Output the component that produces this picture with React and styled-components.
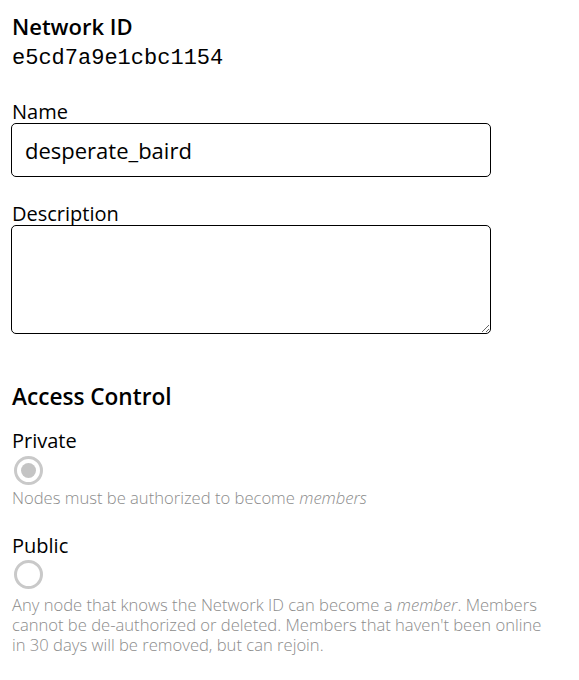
import React from "react";
import styled, { createGlobalStyle } from "styled-components";

const Global = createGlobalStyle`
  html, body { margin: 0; padding: 0; background: #ffffff; }
  body { font-family: "Open Sans", "Noto Sans", sans-serif; color: #000; }
`;

const Form = styled.div`
  width: 480px;
  padding: 12px 0 0 11px;
  display: flex;
  flex-direction: column;
`;

const Heading = styled.h2`
  margin: ${(p) => p.$top || 0}px 0 0 1px;
  font-size: ${(p) => p.$size || 22}px;
  line-height: 28px;
  font-weight: 600;
`;

const NetId = styled.div`
  margin: 6px 0 0 1px;
  font-family: "Liberation Mono", "DejaVu Sans Mono", monospace;
  font-size: 22px;
  line-height: 26px;
`;

const Field = styled.label`
  display: flex;
  flex-direction: column;
  margin-top: ${(p) => p.$top}px;
`;

const Label = styled.span`
  margin-left: 1px;
  font-size: 20px;
  line-height: 22px;
  font-weight: 500;
`;

const TextInput = styled.input`
  box-sizing: border-box;
  width: 480px;
  height: 54px;
  margin: 0;
  padding: 0 13px;
  border: 1px solid #000;
  border-radius: 5px;
  font-family: "Open Sans", "Noto Sans", sans-serif;
  font-size: 22px;
  color: #000;
  outline: none;
`;

const TextArea = styled.textarea`
  box-sizing: border-box;
  width: 480px;
  height: 109px;
  margin: 0;
  padding: 8px 13px;
  border: 1px solid #000;
  border-radius: 5px;
  font-family: "Open Sans", "Noto Sans", sans-serif;
  font-size: 18px;
  resize: vertical;
  outline: none;
  display: block;
`;

const Option = styled.div`
  display: flex;
  flex-direction: column;
  align-items: flex-start;
  margin-top: ${(p) => p.$top}px;
`;

const Radio = styled.input.attrs({ type: "radio" })`
  appearance: none;
  box-sizing: border-box;
  width: 29px;
  height: 29px;
  margin: ${(p) => p.$gap || 5}px 0 0 3px;
  border: 3px solid #c9c9c9;
  border-radius: 50%;
  background: #fff;
  display: grid;
  place-content: center;
  &::before {
    content: "";
    width: 15px;
    height: 15px;
    border-radius: 50%;
    background: #c4c4c4;
    transform: scale(0);
  }
  &:checked::before {
    transform: scale(1);
  }
`;

const Hint = styled.p`
  margin: ${(p) => p.$gap || 3}px 0 0 1px;
  width: 545px;
  font-size: 16.6px;
  line-height: 20px;
  font-weight: 300;
  color: #8c8c8c;
  em { font-style: italic; }
`;

export default function App() {
  return (
    <>
      <Global />
      <Form>
        <Heading>Network ID</Heading>
        <NetId>e5cd7a9e1cbc1154</NetId>
        <Field $top={29}>
          <Label>Name</Label>
          <TextInput defaultValue="desperate_baird" />
        </Field>
        <Field $top={26}>
          <Label>Description</Label>
          <TextArea />
        </Field>
        <Heading $top={49} $size={22.6}>Access Control</Heading>
        <Option $top={19}>
          <Label>Private</Label>
          <Radio name="access" defaultChecked $gap={4} />
          <Hint>
            Nodes must be authorized to become <em>members</em>
          </Hint>
        </Option>
        <Option $top={27}>
          <Label>Public</Label>
          <Radio name="access" $gap={3} />
          <Hint $gap={6}>
            Any node that knows the Network ID can become a <em>member</em>.
            Members cannot be de-authorized or deleted. Members that haven't
            been online in 30 days will be removed, but can rejoin.
          </Hint>
        </Option>
      </Form>
    </>
  );
}
